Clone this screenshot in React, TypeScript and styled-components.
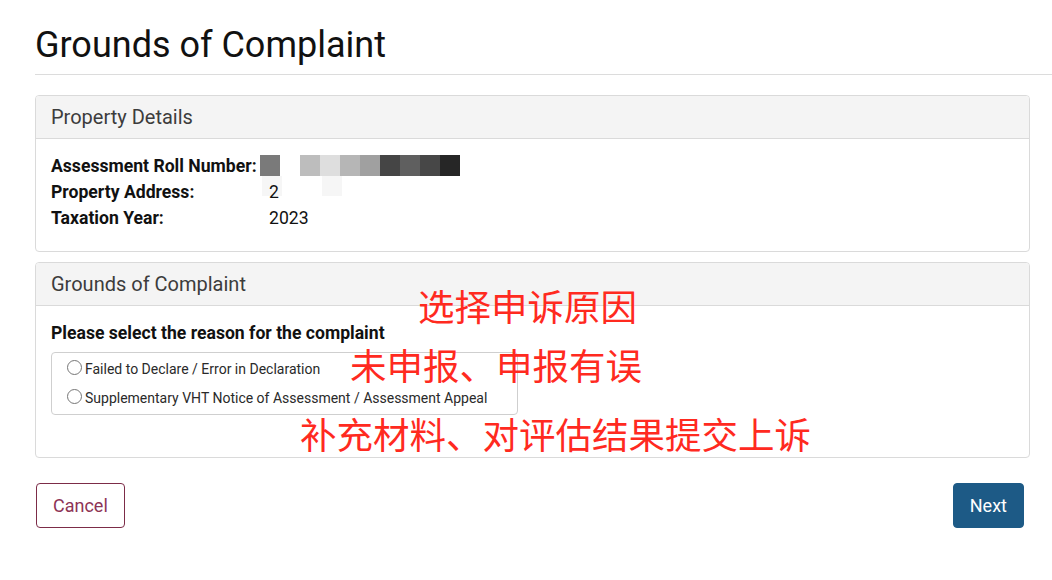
import React from 'react';
import styled, { createGlobalStyle } from 'styled-components';

const GlobalStyle = createGlobalStyle`
  * { box-sizing: border-box; }
  body {
    margin: 0;
    background: #ffffff;
    font-family: Roboto, "Noto Sans CJK SC", sans-serif;
    color: #111;
  }
`;

const Page = styled.div`
  position: relative;
  width: 1052px;
  height: 580px;
  padding: 0 0 0 35px;
  overflow: hidden;
`;

const Title = styled.h1`
  margin: 0;
  padding: 22px 0 0 0;
  font-size: 36px;
  font-weight: 400;
  line-height: 46px;
  color: #111;
`;

const Rule = styled.hr`
  margin: 6px 0 20px;
  border: 0;
  border-top: 1px solid #dcdcdc;
`;

const Card = styled.section<{ $minHeight: number }>`
  width: 995px;
  min-height: ${p => p.$minHeight}px;
  border: 1px solid #dadada;
  border-radius: 4px;
  margin-bottom: 10px;
  overflow: hidden;
`;

const CardHeader = styled.div`
  height: 43px;
  padding: 0 15px;
  display: flex;
  align-items: center;
  background: #f4f4f4;
  border-bottom: 1px solid #dadada;
  font-size: 20px;
  color: #3c3c3c;
`;

const CardBody = styled.div`
  padding: 14px 15px 20px;
`;

const DetailGrid = styled.div`
  display: grid;
  grid-template-columns: 218px 1fr;
  font-size: 17.6px;
  line-height: 26px;
`;

const Label = styled.div`
  font-weight: 700;
  color: #111;
  white-space: nowrap;
`;

const Value = styled.div`
  position: relative;
  color: #111;
`;

const Pixels = styled.div`
  position: absolute;
  left: -9px;
  top: 2px;
  display: flex;
`;

const Pixel = styled.span<{ $c: string }>`
  width: 20px;
  height: 21px;
  background: ${p => p.$c};
`;

const Ghosts = styled.div`
  position: absolute;
  left: -7px;
  top: 23px;
  display: flex;
  gap: 40px;
`;

const Ghost = styled.span`
  width: 20px;
  height: 20px;
  background: #f6f6f6;
`;

const Question = styled.div`
  font-size: 17.6px;
  font-weight: 700;
  line-height: 26px;
`;

const OptionBox = styled.div`
  width: 467px;
  margin-top: 6px;
  padding: 7px 14px 7px;
  border: 1px solid #cfcfcf;
  border-radius: 4px;
  display: flex;
  flex-direction: column;
  gap: 11px;
`;

const Option = styled.label`
  display: flex;
  align-items: center;
  font-size: 14px;
  color: #2a2a2a;
  line-height: 18px;
`;

const Radio = styled.span`
  flex: none;
  width: 15px;
  height: 15px;
  margin: -4px 3px 0 1px;
  border: 1px solid #767676;
  border-radius: 50%;
  background: #fff;
`;

const Actions = styled.div`
  width: 989px;
  margin-top: 25px;
  padding-left: 1px;
  display: flex;
  justify-content: space-between;
`;

const Button = styled.button<{ $primary?: boolean }>`
  height: 45px;
  padding: 0 16px;
  font-family: Roboto, sans-serif;
  font-size: 18px;
  border-radius: 4px;
  border: 1px solid ${p => (p.$primary ? '#1d5a86' : '#7c2c48')};
  background: ${p => (p.$primary ? '#1d5a86' : '#fff')};
  color: ${p => (p.$primary ? '#fff' : '#8e3355')};
`;

const Note = styled.div<{ $x: number; $y: number }>`
  position: absolute;
  left: ${p => p.$x}px;
  top: ${p => p.$y}px;
  font-family: "Noto Sans CJK SC", sans-serif;
  font-size: 36.5px;
  line-height: 40px;
  color: #ff2a1f;
  white-space: nowrap;
`;

const pixels = ['#7a7a7a', '#ffffff', '#bdbdbd', '#dedede', '#b6b6b6', '#a0a0a0', '#454545', '#5f5f5f', '#474747', '#262626'];

export default function App() {
  return (
    <>
      <GlobalStyle />
      <Page>
        <Title>Grounds of Complaint</Title>
        <Rule />

        <Card $minHeight={156}>
          <CardHeader>Property Details</CardHeader>
          <CardBody>
            <DetailGrid>
              <Label>Assessment Roll Number:</Label>
              <Value>
                <Pixels>
                  {pixels.map((c, i) => (
                    <Pixel key={i} $c={c} />
                  ))}
                </Pixels>
                <Ghosts>
                  <Ghost />
                  <Ghost />
                </Ghosts>
              </Value>
              <Label>Property Address:</Label>
              <Value>2</Value>
              <Label>Taxation Year:</Label>
              <Value>2023</Value>
            </DetailGrid>
          </CardBody>
        </Card>

        <Card $minHeight={196}>
          <CardHeader>Grounds of Complaint</CardHeader>
          <CardBody>
            <Question>Please select the reason for the complaint</Question>
            <OptionBox>
              <Option>
                <Radio />
                Failed to Declare / Error in Declaration
              </Option>
              <Option>
                <Radio />
                Supplementary VHT Notice of Assessment / Assessment Appeal
              </Option>
            </OptionBox>
          </CardBody>
        </Card>

        <Actions>
          <Button>Cancel</Button>
          <Button $primary>Next</Button>
        </Actions>

        <Note $x={418} $y={286}>选择申诉原因</Note>
        <Note $x={350} $y={345}>未申报、申报有误</Note>
        <Note $x={300} $y={414}>补充材料、对评估结果提交上诉</Note>
      </Page>
    </>
  );
}
